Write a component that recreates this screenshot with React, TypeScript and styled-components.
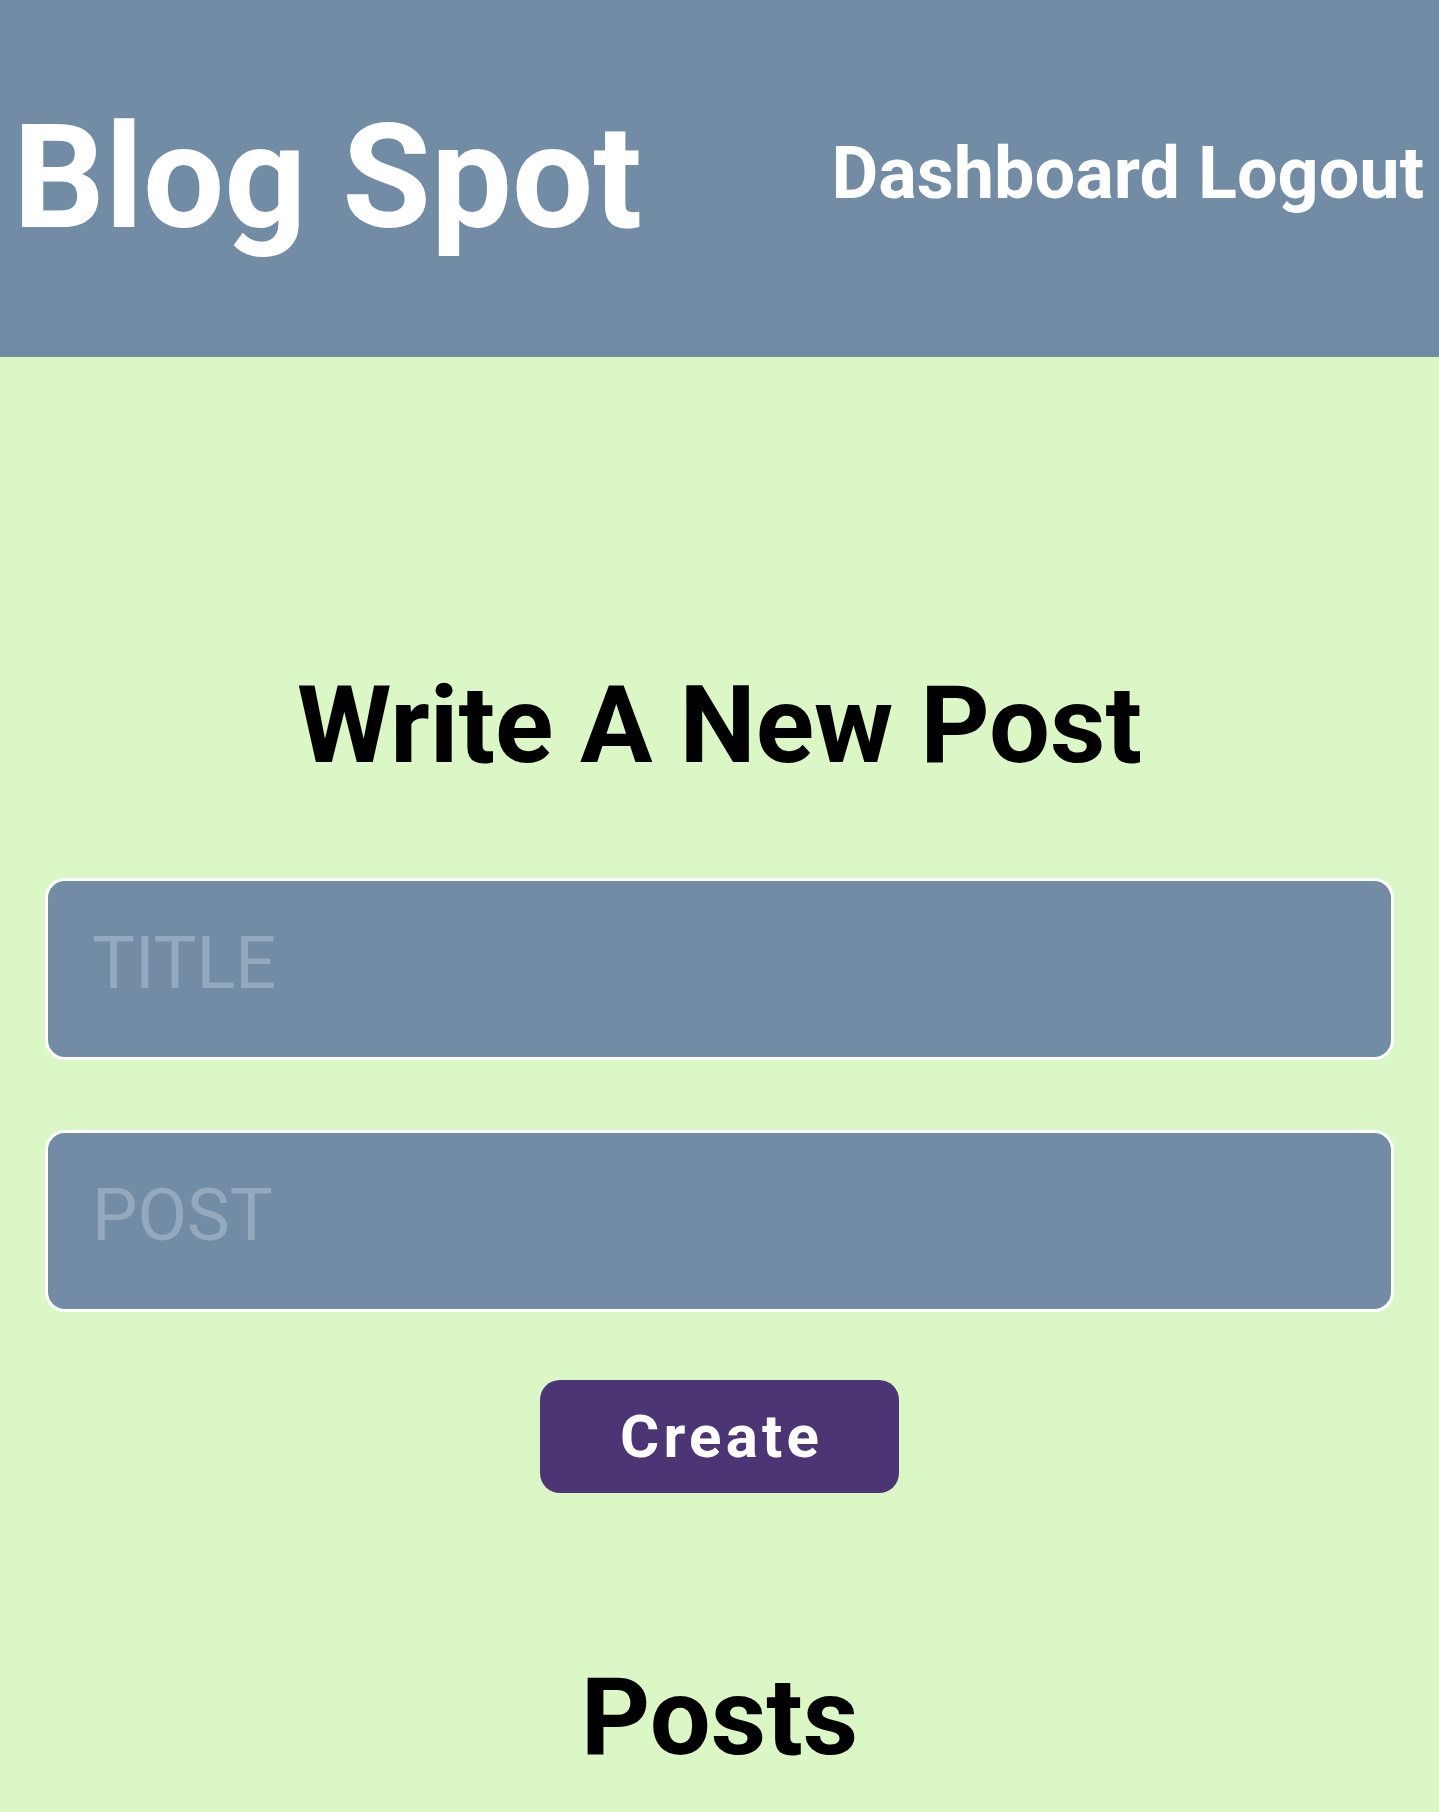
import React from "react";
import styled, { createGlobalStyle } from "styled-components";

const GlobalStyle = createGlobalStyle`
  html, body {
    margin: 0;
    padding: 0;
    background: #daf7c5;
    font-family: Roboto, "Liberation Sans", sans-serif;
  }
  * { box-sizing: border-box; }
`;

const Header = styled.header`
  height: 357px;
  background: #738ca6;
  display: flex;
  align-items: center;
  justify-content: space-between;
  padding: 0 15px 0 13px;
`;

const Brand = styled.h1`
  margin: 0;
  color: #ffffff;
  font-size: 144px;
  font-weight: 700;
  line-height: 1.172;
`;

const Nav = styled.nav`
  display: flex;
  gap: 18px;
  margin-bottom: 10px;
`;

const NavLink = styled.a`
  color: #ffffff;
  font-size: 72px;
  font-weight: 700;
  text-decoration: none;
  cursor: pointer;
`;

const Main = styled.main`
  display: flex;
  flex-direction: column;
  align-items: center;
  padding: 305px 45px 40px;
`;

const Heading = styled.h2`
  margin: 0;
  font-size: 108px;
  font-weight: 700;
  line-height: 1.172;
  color: #000;
  text-align: center;
`;

const Form = styled.form`
  width: 100%;
  display: flex;
  flex-direction: column;
  align-items: center;
  margin-top: 89px;
`;

const Field = styled.input<{ $gap: number }>`
  width: 100%;
  height: 182px;
  border: 3px solid #ffffff;
  border-radius: 20px;
  background: #738ca6;
  padding: 0 0 10px 44px;
  font-family: Roboto, "Liberation Sans", sans-serif;
  font-size: 72px;
  color: #ffffff;
  outline: none;
  margin-bottom: ${(p) => p.$gap}px;
  &::placeholder {
    color: #94a9bd;
  }
`;

const CreateButton = styled.button`
  width: 359px;
  height: 113px;
  border: none;
  border-radius: 20px;
  background: #4b3574;
  color: #ffffff;
  font-family: Roboto, "Liberation Sans", sans-serif;
  font-size: 60px;
  font-weight: 700;
  letter-spacing: 0.07em;
  padding: 0 0 0 0.07em;
  cursor: pointer;
`;

const PostsHeading = styled(Heading)`
  margin-top: 161px;
`;

export default function App() {
  return (
    <>
      <GlobalStyle />
      <Header>
        <Brand>Blog Spot</Brand>
        <Nav>
          <NavLink>Dashboard</NavLink>
          <NavLink>Logout</NavLink>
        </Nav>
      </Header>
      <Main>
        <Heading>Write A New Post</Heading>
        <Form onSubmit={(e) => e.preventDefault()}>
          <Field $gap={70} placeholder="TITLE" />
          <Field $gap={68} placeholder="POST" />
          <CreateButton type="submit">Create</CreateButton>
        </Form>
        <PostsHeading>Posts</PostsHeading>
      </Main>
    </>
  );
}
